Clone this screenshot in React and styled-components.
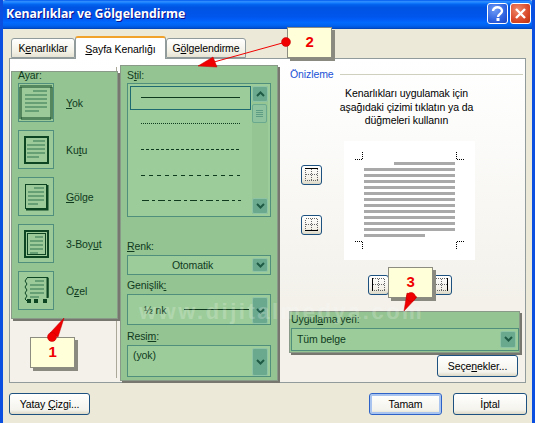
import React from 'react';
import styled, { createGlobalStyle } from 'styled-components';

const GlobalStyle = createGlobalStyle`
  html, body {
    margin: 0;
    padding: 0;
    background: #ece9d8;
  }
  * {
    box-sizing: border-box;
  }
`;

const greenInk = '#0f3a1e';
const greenEdge = '#4f8f7c';

const Window = styled.div`
  position: relative;
  width: 535px;
  height: 423px;
  overflow: hidden;
  display: flex;
  flex-direction: column;
  font-family: 'Liberation Sans', Arial, sans-serif;
  font-size: 10.5px;
  letter-spacing: -0.1px;
  color: #000;
  background: #ece9d8;
  border-left: 3px solid #0a4fe0;
  border-right: 3px solid #0a4fe0;
`;

const TitleBar = styled.div`
  height: 29px;
  margin: 0 -3px;
  flex: none;
  display: flex;
  align-items: center;
  justify-content: space-between;
  padding: 0 4px 2px 6px;
  border-radius: 6px 6px 0 0;
  background: linear-gradient(
    #0058ee 0%,
    #3593ff 6%,
    #127dff 10%,
    #0262ee 16%,
    #0054e3 26%,
    #0055eb 56%,
    #005bf5 66%,
    #026afe 78%,
    #0062ef 88%,
    #0052d6 96%,
    #0040ab 100%
  );
`;

const Title = styled.div`
  color: #fff;
  font-family: 'Noto Sans', sans-serif;
  font-weight: 700;
  font-size: 12.3px;
  letter-spacing: 0;
  text-shadow: 1px 1px 0 #0f1089;
`;

const TitleButtons = styled.div`
  display: flex;
  gap: 2px;
`;

const TitleButton = styled.div`
  width: 21px;
  height: 21px;
  border: 1px solid #fff;
  border-radius: 3px;
  display: flex;
  align-items: center;
  justify-content: center;
  background: ${({ $close }) =>
    $close
      ? 'radial-gradient(circle at 35% 30%, #ee8a6a, #d9492a 60%, #b9320f)'
      : 'radial-gradient(circle at 35% 30%, #6f9cf5, #2f62e0 60%, #1c45c0)'};
`;

const Body = styled.div`
  flex: 1;
  display: flex;
  flex-direction: column;
  padding: 7px 6px 0;
`;

const TabRow = styled.div`
  height: 22px;
  flex: none;
  display: flex;
  align-items: flex-end;
  padding-left: 2px;
  position: relative;
  z-index: 1;
`;

const Tab = styled.div`
  width: ${({ $w }) => $w}px;
  height: ${({ $active }) => ($active ? 23 : 20)}px;
  margin-bottom: ${({ $active }) => ($active ? -1 : 0)}px;
  display: flex;
  align-items: center;
  justify-content: center;
  background: ${({ $active }) =>
    $active ? '#fff' : 'linear-gradient(#fff, #f3f1e6 70%, #e6e3d4)'};
  border: 1px solid #919b9c;
  border-bottom: ${({ $active }) => ($active ? 'none' : '1px solid #919b9c')};
  border-top: ${({ $active }) =>
    $active ? '2px solid #f0a22c' : '1px solid #919b9c'};
  border-radius: 3px 3px 0 0;
`;

const TabPanel = styled.div`
  height: 325px;
  width: 517px;
  flex: none;
  display: flex;
  border: 1px solid #919b9c;
  background: linear-gradient(#fff, #fcfcfb 20%, #f3f1ea 75%);
`;

const AyarColumn = styled.div`
  width: 107px;
  height: 311px;
  margin-top: 8px;
  flex: none;
  border-right: 1px solid #aca899;
`;

const GreenBlock = styled.div`
  background: #94c491;
  border: 1px solid #8a9a88;
  box-shadow: 2px 2px 0 #77776f;
  color: ${greenInk};
`;

const AyarPanel = styled(GreenBlock)`
  width: 107px;
  height: 248px;
  margin: 4px 0 0 1px;
  padding: 0 0 0 6px;
  display: flex;
  flex-direction: column;
`;

const FieldLabel = styled.div`
  line-height: 14px;
  height: 14px;
`;

const AyarLabel = styled(FieldLabel)`
  margin: -4px 0 1px;
`;

const SettingList = styled.div`
  display: flex;
  flex-direction: column;
  gap: 8px;
`;

const SettingRow = styled.div`
  display: flex;
  align-items: center;
  gap: 12px;
`;

const SettingTile = styled.div`
  width: 36px;
  height: 39px;
  border: 1px solid ${greenEdge};
  background: #9ccb99;
`;

const SettingSvg = styled.svg`
  display: block;
`;

const StilPanel = styled(GreenBlock)`
  width: 158px;
  height: 316px;
  margin: 6px 0 0 3px;
  padding: 2px 6px 0;
  display: flex;
  flex-direction: column;
`;

const ListBox = styled.div`
  width: 144px;
  height: 134px;
  margin-top: 1px;
  padding: 2px;
  flex: none;
  border: 1px solid ${greenEdge};
  background: #9ccc99;
  display: flex;
  gap: 1px;
`;

const LineList = styled.div`
  width: 122px;
  display: flex;
  flex-direction: column;
`;

const LineOption = styled.div`
  height: 24px;
  margin-bottom: 2px;
  padding-bottom: 1px;
  flex: none;
  display: flex;
  align-items: center;
  justify-content: center;
  border: 1px solid ${({ $selected }) => ($selected ? '#1f6a70' : 'transparent')};
  &::after {
    content: '';
    width: 99px;
    height: 1px;
    background: repeating-linear-gradient(
      90deg,
      #0f3a1e 0 ${({ $dash }) => $dash}px,
      transparent ${({ $dash }) => $dash}px ${({ $dash, $gap }) => $dash + $gap}px
    );
  }
`;

const MixedLine = styled.svg`
  display: block;
  margin: 9px 0 0 12px;
`;

const ScrollBar = styled.div`
  width: 16px;
  display: flex;
  flex-direction: column;
  justify-content: space-between;
  background: #94c592;
`;

const ScrollTop = styled.div`
  display: flex;
  flex-direction: column;
  gap: 2px;
`;

const ArrowBtn = styled.div`
  width: 16px;
  height: ${({ $h }) => $h || 16}px;
  flex: none;
  border: 1px solid #8fc3a6;
  border-radius: 2px;
  background: #6ba98f;
  display: flex;
  align-items: center;
  justify-content: center;
`;

const Thumb = styled.div`
  width: 15px;
  height: 19px;
  border: 1px solid #6ba98f;
  border-radius: 2px;
  background: #8fc3a0;
  display: flex;
  flex-direction: column;
  align-items: center;
  justify-content: center;
  gap: 1px;
  & > i {
    width: 7px;
    height: 1px;
    background: #5e9c84;
  }
`;

const StilField = styled.div`
  margin-top: ${({ $top }) => $top}px;
`;

const Select = styled.div`
  height: ${({ $h }) => $h}px;
  width: ${({ $w }) => $w || 144}px;
  margin-top: 2px;
  padding: 2px;
  display: flex;
  justify-content: space-between;
  border: 1px solid ${greenEdge};
  background: #9ccc99;
  color: ${greenInk};
`;

const SelectValue = styled.div`
  flex: 1;
  display: flex;
  align-items: ${({ $top }) => ($top ? 'flex-start' : 'center')};
  justify-content: ${({ $center }) => ($center ? 'center' : 'flex-start')};
  padding: ${({ $top }) => ($top ? '1px 0 0 3px' : '0 0 0 3px')};
`;

const WidthValue = styled.span`
  width: 51px;
  padding-left: 11px;
`;

const WidthLine = styled.span`
  width: 65px;
  height: 1px;
  background: #0f3a1e;
`;

const PreviewColumn = styled.div`
  flex: 1;
  display: flex;
  flex-direction: column;
  padding: 9px 5px 0 12px;
  position: relative;
`;

const GroupHead = styled.div`
  display: flex;
  align-items: center;
  gap: 6px;
  color: #1a52d6;
  &::after {
    content: '';
    flex: 1;
    height: 1px;
    background: #d0d0bf;
  }
`;

const Hint = styled.div`
  margin-top: 7px;
  text-align: center;
  line-height: 13.5px;
  width: 233px;
`;

const PreviewGrid = styled.div`
  margin-top: 13px;
  display: grid;
  grid-template-columns: 21px 131px;
  column-gap: 22px;
  padding-left: 11px;
`;

const SideButtons = styled.div`
  display: flex;
  flex-direction: column;
  gap: 30px;
  padding-top: 24px;
`;

const Sheet = styled.div`
  width: 131px;
  height: 119px;
  background: #fff;
`;

const BottomButtons = styled.div`
  margin: 15px 0 0 78px;
  display: flex;
  gap: 42px;
`;

const BorderButton = styled.div`
  width: 21px;
  height: 20px;
  border: 1px solid #1c5180;
  border-radius: 3px;
  background: linear-gradient(#fff, #f3f1e8 70%, #dcd8c6);
  display: flex;
  align-items: center;
  justify-content: center;
`;

const ApplyPanel = styled(GreenBlock)`
  width: 231px;
  height: 42px;
  margin: 16px 0 0 -1px;
  padding: 0 1px;
  position: relative;
  z-index: 1;
`;

const ActionButton = styled.div`
  width: ${({ $w }) => $w}px;
  height: ${({ $h }) => $h || 22}px;
  flex: none;
  display: flex;
  align-items: center;
  justify-content: center;
  border: 1px solid ${({ $focus }) => ($focus ? '#2d63c8' : '#1c5180')};
  border-radius: 3px;
  background: linear-gradient(#fff, #f4f3ec 80%, #dcd8c6);
  box-shadow: ${({ $focus }) =>
    $focus ? 'inset 0 0 0 2px #a9c4ee' : 'none'};
`;

const OptionsRow = styled.div`
  display: flex;
  justify-content: flex-end;
  padding-top: 2px;
  width: 228px;
`;

const Footer = styled.div`
  flex: 1;
  display: flex;
  align-items: flex-start;
  padding-top: 10px;
`;

const FooterRight = styled.div`
  margin-left: auto;
  display: flex;
  gap: 11px;
  margin-right: -1px;
`;

const Callout = styled.div`
  position: absolute;
  left: ${({ $x }) => $x}px;
  top: ${({ $y }) => $y}px;
  width: 45px;
  height: 31px;
  padding-bottom: 2px;
  display: flex;
  align-items: center;
  justify-content: center;
  background: #ffffd9;
  border: 1px solid #8c8c80;
  box-shadow: 3px 3px 0 #8a8a80;
  color: #f00000;
  font-weight: 700;
  font-size: 15px;
  z-index: 3;
`;

const Pointers = styled.svg`
  position: absolute;
  left: -3px;
  top: 0;
  z-index: 4;
  pointer-events: none;
`;

const Watermark = styled.div`
  position: absolute;
  left: 136px;
  top: 299px;
  color: #fff;
  opacity: 0.2;
  font-weight: 700;
  font-size: 22px;
  letter-spacing: 2.5px;
  z-index: 2;
  white-space: nowrap;
`;

const frame = '#0d4523';
const textBar = '#669f74';

function Page({ x, y, w, rows }) {
  return Array.from({ length: rows }, (_, i) => {
    const first = i === 0;
    const last = i === rows - 1;
    const cut = Math.round(w * 0.35);
    return (
      <rect
        key={i}
        x={first ? x + cut : x}
        y={y + i * 4}
        width={first || last ? w - cut : w}
        height="2"
        fill={textBar}
      />
    );
  });
}

function SettingIcon({ kind }) {
  return (
    <SettingSvg width="34" height="37" viewBox="0 0 34 37">
      {kind === 'yok' && (
        <>
          <rect x="1.5" y="2.5" width="31" height="32" fill="none" stroke={frame} strokeWidth="3" strokeDasharray="1 1" />
          <Page x={6} y={6} w={22} rows={6} />
        </>
      )}
      {kind === 'kutu' && (
        <>
          <rect x="6" y="6" width="23" height="26" fill="none" stroke={frame} strokeWidth="2" />
          <Page x={8} y={9} w={18} rows={5} />
        </>
      )}
      {kind === 'golge' && (
        <>
          <rect x="6.5" y="6.5" width="21" height="24" fill="none" stroke={frame} />
          <path d="M28.5 7v24.5H7" fill="none" stroke={frame} strokeWidth="2" />
          <Page x={9} y={9} w={16} rows={5} />
        </>
      )}
      {kind === 'boyut' && (
        <>
          <rect x="6" y="6" width="23" height="26" fill="none" stroke={frame} strokeWidth="2" />
          <rect x="8.5" y="8.5" width="18" height="21" fill="none" stroke={frame} />
          <Page x={11} y={11} w={13} rows={5} />
        </>
      )}
      {kind === 'ozel' && (
        <>
          <path d="M8 5.5h21v20" fill="none" stroke={frame} />
          <path d="M28.5 6v20" fill="none" stroke={frame} strokeWidth="2" />
          <path d="M8 6l-2 3 2 3-2 3 2 3-2 3 2 3-2 3 2 2" fill="none" stroke={frame} />
          <rect x="8" y="27" width="4" height="4" fill={frame} />
          <rect x="15" y="27" width="4" height="4" fill={frame} />
          <rect x="24" y="27" width="4" height="4" fill={frame} />
          <Page x={11} y={8} w={14} rows={5} />
        </>
      )}
    </SettingSvg>
  );
}

function Chevron({ up }) {
  return (
    <svg width="9" height="6" viewBox="0 0 9 6">
      <path d={up ? 'M1 5l3.5-3.5L8 5' : 'M1 1l3.5 3.5L8 1'} fill="none" stroke="#1f5a45" strokeWidth="2" />
    </svg>
  );
}

function EdgeIcon({ side }) {
  const solid = {
    top: 'M1 1.5h13',
    bottom: 'M1 13.5h13',
    left: 'M1.5 1v13',
    right: 'M13.5 1v13',
  }[side];
  return (
    <svg width="15" height="15" viewBox="0 0 15 15" shapeRendering="crispEdges">
      <path
        d="M1.5 1.5h12v12h-12zM1.5 7.5h12M7.5 1.5v12"
        fill="none"
        stroke="#666"
        strokeDasharray="1 1"
      />
      <path d={solid} stroke="#000" strokeWidth="1" />
    </svg>
  );
}

function PreviewDrawing() {
  const rows = Array.from({ length: 13 }, (_, i) => i);
  return (
    <svg width="131" height="119" viewBox="0 0 131 119">
      {rows.map((i) => (
        <rect
          key={i}
          x={i === 0 ? 50 : 20}
          y={21 + i * 6}
          width={i === 0 || i === 12 ? 61 : 91}
          height="3"
          fill="#a9a9a9"
        />
      ))}
      <g fill="none" stroke="#000" strokeDasharray="1 1">
        <path d="M11 18.5h7.5v-8" />
        <path d="M120 18.5h-7.5v-8" />
        <path d="M11 100.5h7.5v8" />
        <path d="M120 100.5h-7.5v8" />
      </g>
    </svg>
  );
}

const settings = [
  { kind: 'yok', label: <><u>Y</u>ok</> },
  { kind: 'kutu', label: <>Ku<u>t</u>u</> },
  { kind: 'golge', label: <><u>G</u>ölge</> },
  { kind: 'boyut', label: <>3-Boy<u>u</u>t</> },
  { kind: 'ozel', label: <>Ö<u>z</u>el</> },
];

export default function App() {
  return (
    <>
      <GlobalStyle />
      <Window>
        <TitleBar>
          <Title>Kenarlıklar ve Gölgelendirme</Title>
          <TitleButtons>
            <TitleButton>
              <svg width="13" height="15" viewBox="0 0 13 15">
                <path d="M2 5c0-5 9-5 9 0 0 3-4 3-4 6" fill="none" stroke="#fff" strokeWidth="2.4" />
                <rect x="5.5" y="12" width="3" height="3" fill="#fff" />
              </svg>
            </TitleButton>
            <TitleButton $close>
              <svg width="13" height="13" viewBox="0 0 13 13">
                <path d="M2 2l9 9M11 2l-9 9" stroke="#fff" strokeWidth="2.4" />
              </svg>
            </TitleButton>
          </TitleButtons>
        </TitleBar>
        <Body>
          <TabRow>
            <Tab $w={64}><span>K<u>e</u>narlıklar</span></Tab>
            <Tab $w={91} $active><span><u>S</u>ayfa Kenarlığı</span></Tab>
            <Tab $w={80}><span>G<u>ö</u>lgelendirme</span></Tab>
          </TabRow>
          <TabPanel>
            <AyarColumn>
              <AyarPanel>
                <AyarLabel>Ayar:</AyarLabel>
                <SettingList>
                  {settings.map((s) => (
                    <SettingRow key={s.kind}>
                      <SettingTile><SettingIcon kind={s.kind} /></SettingTile>
                      <span>{s.label}</span>
                    </SettingRow>
                  ))}
                </SettingList>
              </AyarPanel>
            </AyarColumn>
            <StilPanel>
              <FieldLabel>S<u>t</u>il:</FieldLabel>
              <ListBox>
                <LineList>
                  <LineOption $selected $dash={1} $gap={0} />
                  <LineOption $dash={1} $gap={1} />
                  <LineOption $dash={3} $gap={2} />
                  <LineOption $dash={4} $gap={4} />
                  <MixedLine width="99" height="3" viewBox="0 0 99 3">
                    <path d="M0 1.5h99" stroke="#0f3a1e" strokeDasharray="7 3 3 3" />
                  </MixedLine>
                </LineList>
                <ScrollBar>
                  <ScrollTop>
                    <ArrowBtn><Chevron up /></ArrowBtn>
                    <Thumb><i /><i /><i /><i /></Thumb>
                  </ScrollTop>
                  <ArrowBtn><Chevron /></ArrowBtn>
                </ScrollBar>
              </ListBox>
              <StilField $top={22}>
                <FieldLabel><u>R</u>enk:</FieldLabel>
                <Select $h={20}>
                  <SelectValue $center>Otomatik</SelectValue>
                  <ArrowBtn $h={14}><Chevron /></ArrowBtn>
                </Select>
              </StilField>
              <StilField $top={3}>
                <FieldLabel>Genişlik<u>:</u></FieldLabel>
                <Select $h={31}>
                  <SelectValue>
                    <WidthValue>½ nk</WidthValue>
                    <WidthLine />
                  </SelectValue>
                  <ArrowBtn $h={27}><Chevron /></ArrowBtn>
                </Select>
              </StilField>
              <StilField $top={4}>
                <FieldLabel>Resi<u>m</u>:</FieldLabel>
                <Select $h={32}>
                  <SelectValue $top>(yok)</SelectValue>
                  <ArrowBtn $h={28}><Chevron /></ArrowBtn>
                </Select>
              </StilField>
            </StilPanel>
            <PreviewColumn>
              <GroupHead>Önizleme</GroupHead>
              <Hint>
                Kenarlıkları uygulamak için<br />
                aşağıdaki çizimi tıklatın ya da<br />
                düğmeleri kullanın
              </Hint>
              <PreviewGrid>
                <SideButtons>
                  <BorderButton><EdgeIcon side="top" /></BorderButton>
                  <BorderButton><EdgeIcon side="bottom" /></BorderButton>
                </SideButtons>
                <Sheet><PreviewDrawing /></Sheet>
              </PreviewGrid>
              <BottomButtons>
                <BorderButton><EdgeIcon side="left" /></BorderButton>
                <BorderButton><EdgeIcon side="right" /></BorderButton>
              </BottomButtons>
              <ApplyPanel>
                <FieldLabel>Uygul<u>a</u>ma yeri:</FieldLabel>
                <Select $h={23} $w={228}>
                  <SelectValue>Tüm belge</SelectValue>
                  <ArrowBtn $h={17}><Chevron /></ArrowBtn>
                </Select>
              </ApplyPanel>
              <OptionsRow>
                <ActionButton $w={81}><span>Seçe<u>n</u>ekler...</span></ActionButton>
              </OptionsRow>
            </PreviewColumn>
          </TabPanel>
          <Footer>
            <ActionButton $w={81}><span>Yatay <u>Ç</u>izgi...</span></ActionButton>
            <FooterRight>
              <ActionButton $w={73} $focus>Tamam</ActionButton>
              <ActionButton $w={74}>İptal</ActionButton>
            </FooterRight>
          </Footer>
        </Body>
        <Watermark>www.dijitalmedya.com</Watermark>
        <Callout $x={27} $y={337}>1</Callout>
        <Callout $x={284} $y={27}>2</Callout>
        <Callout $x={385} $y={267}>3</Callout>
        <Pointers width="535" height="423" viewBox="0 0 535 423">
          <g fill="#f00000" stroke="#c00000" strokeWidth="0.5">
            <polygon points="64,318 50,333 58,337" />
            <circle cx="52" cy="337" r="4.5" />
            <polygon points="198,66 213,57 217,67" />
            <path d="M214 62L286 42" stroke="#f00000" strokeWidth="1" />
            <circle cx="286" cy="42" r="4.5" />
            <polygon points="404,311 407,293 417,297" />
            <circle cx="411" cy="297" r="4.5" />
          </g>
        </Pointers>
      </Window>
    </>
  );
}
